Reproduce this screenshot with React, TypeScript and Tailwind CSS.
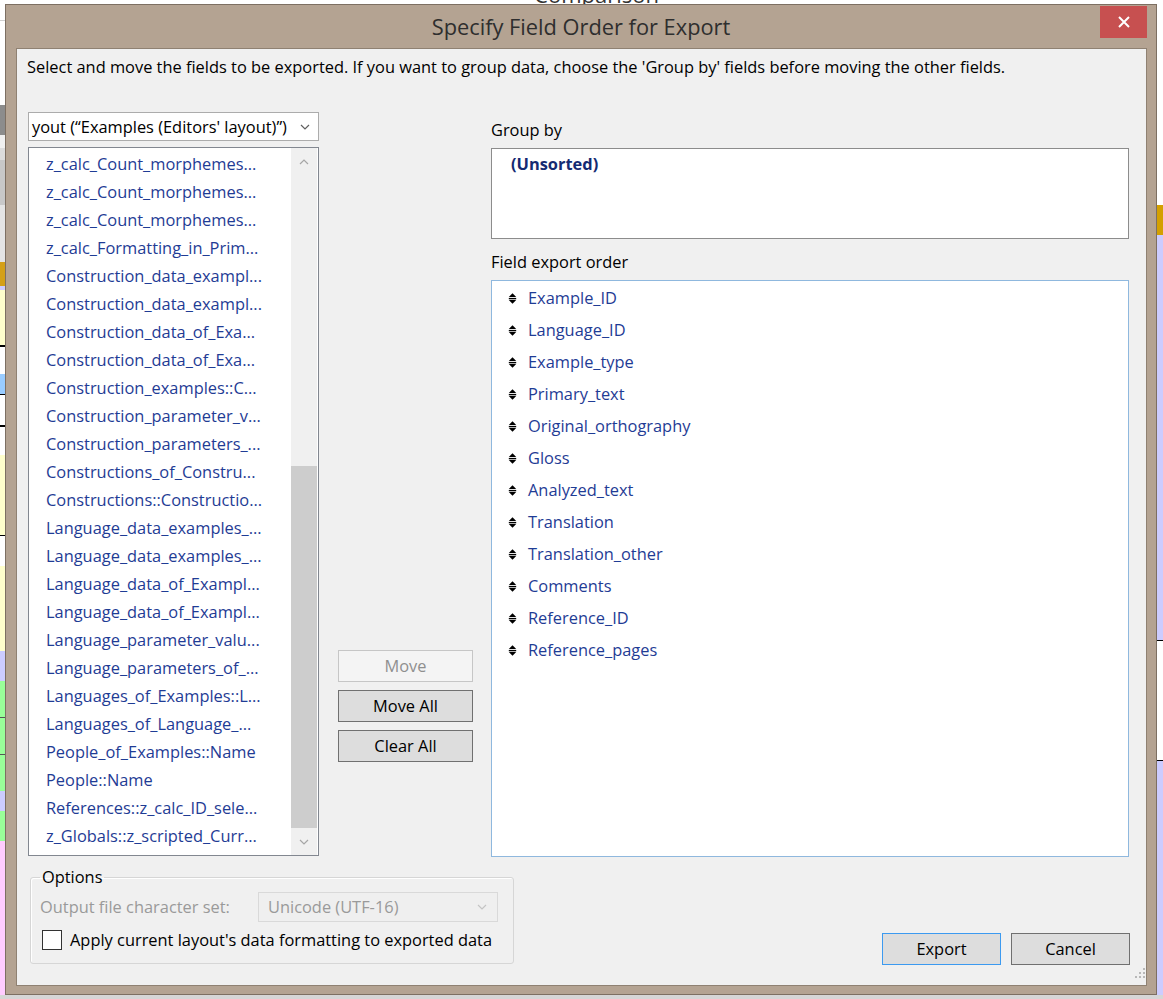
import React from "react";

const leftBlocks: [number, string][] = [
  [16, "#ffffff"], [1, "#d0d0d0"], [84, "#ffffff"], [30, "#8c8c8c"], [13, "#f0f0f0"], [12, "#dcdcdc"],
  [45, "#c8c8c8"], [57, "#e4e4e4"], [24, "#d4a017"], [4, "#ccccff"], [55, "#ffffcc"], [2, "#000000"],
  [27, "#ffffff"], [20, "#99ccff"], [1, "#000000"], [30, "#ffffff"], [2, "#000000"], [28, "#ffffff"],
  [80, "#ffffcc"], [1, "#000000"], [30, "#ffffff"], [85, "#ffffcc"], [30, "#ccccff"], [36, "#99ff99"],
  [1, "#555555"], [36, "#99ff99"], [1, "#555555"], [36, "#99ff99"], [20, "#ccccff"], [30, "#99ff99"],
];

const rightBlocks: [number, string][] = [
  [201, "#ffffff"], [30, "#d4a000"], [405, "#ccccff"], [1, "#000000"], [119, "#ffffff"], [1, "#000000"],
];

const listItems = [
  "z_calc_Count_morphemes...",
  "z_calc_Count_morphemes...",
  "z_calc_Count_morphemes...",
  "z_calc_Formatting_in_Prim...",
  "Construction_data_exampl...",
  "Construction_data_exampl...",
  "Construction_data_of_Exa...",
  "Construction_data_of_Exa...",
  "Construction_examples::C...",
  "Construction_parameter_v...",
  "Construction_parameters_...",
  "Constructions_of_Constru...",
  "Constructions::Constructio...",
  "Language_data_examples_...",
  "Language_data_examples_...",
  "Language_data_of_Exampl...",
  "Language_data_of_Exampl...",
  "Language_parameter_valu...",
  "Language_parameters_of_...",
  "Languages_of_Examples::L...",
  "Languages_of_Language_...",
  "People_of_Examples::Name",
  "People::Name",
  "References::z_calc_ID_sele...",
  "z_Globals::z_scripted_Curr...",
];

const fields = [
  "Example_ID",
  "Language_ID",
  "Example_type",
  "Primary_text",
  "Original_orthography",
  "Gloss",
  "Analyzed_text",
  "Translation",
  "Translation_other",
  "Comments",
  "Reference_ID",
  "Reference_pages",
];

function Chevron({ color = "#606060", up = false }: { color?: string; up?: boolean }) {
  return (
    <svg width="10" height="6" viewBox="0 0 10 6">
      <path d={up ? "M1 5 L5 1 L9 5" : "M1 1 L5 5 L9 1"} fill="none" stroke={color} strokeWidth="1.2" />
    </svg>
  );
}

function MoveIcon() {
  return (
    <svg width="9" height="11" viewBox="0 0 9 11">
      <path d="M4.5 0.3 L8.2 4 L0.8 4 Z" fill="#000" />
      <rect x="0.8" y="4.9" width="7.4" height="1.4" fill="#000" />
      <path d="M0.8 7.1 L8.2 7.1 L4.5 10.8 Z" fill="#000" />
    </svg>
  );
}

function Grip() {
  return (
    <svg width="14" height="14" viewBox="0 0 14 14">
      {[
        [11, 2], [11, 6], [7, 6], [11, 10], [7, 10], [3, 10],
      ].map(([x, y], i) => (
        <rect key={i} x={x} y={y} width="2" height="2" fill="#b8b8b8" />
      ))}
    </svg>
  );
}

export default function App() {
  return (
    <div className="w-[1163px] h-[999px] flex flex-col bg-white overflow-hidden font-['Segoe_UI','Open_Sans',sans-serif]">
      {/* top sliver of background app */}
      <div className="h-[4px] flex justify-center overflow-visible">
        <div className="text-[22px] leading-[22px] text-[#333] -mt-[17px] ml-[30px]">Comparison</div>
      </div>
      <div className="flex h-[991px]">
        <div className="w-[5px] flex flex-col">
          {leftBlocks.map(([h, c], i) => (
            <div key={i} style={{ height: h, background: c }} />
          ))}
          <div className="flex-1 bg-[#ffccff]" />
        </div>

        {/* dialog */}
        <div className="w-[1152px] h-[991px] border border-[#7d6f62] bg-[#b4a392] flex flex-col">
          <div className="h-[43px] grid grid-cols-[1fr_auto_1fr] items-start">
            <div />
            <div className="text-[21.8px] text-[#2e2e2e] pt-[8px] leading-[28px] whitespace-nowrap">Specify Field Order for Export</div>
            <div className="flex justify-end pr-[9px]">
              <div className="w-[47px] h-[32px] mt-[1px] bg-[#c75050] flex items-center justify-center">
                <svg width="12" height="12" viewBox="0 0 12 12">
                  <path d="M1 1 L11 11 M11 1 L1 11" stroke="#fff" strokeWidth="2" />
                </svg>
              </div>
            </div>
          </div>
          <div className="pl-[10px] pr-[9px] flex-1 flex flex-col">
            <div className="w-[1131px] h-[938px] border border-[#8f8172] bg-[#f0f0f0] flex flex-col text-[16.4px]">
              <div className="h-[63px] pl-[10px] pt-[8px] leading-[20px] text-[#000] whitespace-nowrap">
                Select and move the fields to be exported. If you want to group data, choose the 'Group by' fields before moving the other fields.
              </div>

              {/* main row */}
              <div className="flex h-[745px] pl-[11px]">
                {/* left column */}
                <div className="w-[291px] flex flex-col">
                  <div className="h-[29px] border border-[#acacac] bg-white flex items-center justify-between pl-[3px] pr-[8px]">
                    <span className="whitespace-nowrap leading-[20px]">yout (“Examples (Editors' layout)”)</span>
                    <Chevron />
                  </div>
                  <div className="mt-[6px] h-[709px] border border-[#828790] bg-white flex">
                    <div className="flex-1 pt-[2px] pl-[17px]">
                      {listItems.map((t, i) => (
                        <div key={i} className="h-[28px] leading-[28px] text-[#1f3c95] whitespace-nowrap">{t}</div>
                      ))}
                    </div>
                    <div className="w-[26px] bg-[#f0f0f0] flex flex-col mr-[1px]">
                      <div className="h-[22px] flex items-center justify-center pt-[6px]"><Chevron color="#a6a6a6" up /></div>
                      <div className="h-[296px]" />
                      <div className="h-[362px] bg-[#cdcdcd]" />
                      <div className="flex-1 flex items-center justify-center"><Chevron color="#a6a6a6" /></div>
                    </div>
                  </div>
                </div>

                {/* middle buttons */}
                <div className="w-[135px] ml-[19px] pt-[538px] flex flex-col gap-[8px]">
                  <div className="h-[32px] border border-[#c6c6c6] bg-[#f4f4f4] text-[#8f8f8f] flex items-center justify-center">Move</div>
                  <div className="h-[32px] border border-[#707070] bg-[#dddddd] text-[#000] flex items-center justify-center">Move All</div>
                  <div className="h-[32px] border border-[#707070] bg-[#dddddd] text-[#000] flex items-center justify-center">Clear All</div>
                </div>

                {/* right column */}
                <div className="w-[638px] ml-[18px] pt-[8px] flex flex-col">
                  <div className="h-[20px] leading-[20px] text-[#000]">Group by</div>
                  <div className="mt-[8px] h-[91px] border border-[#8c8c8c] bg-white pt-[1px] pl-[19px]">
                    <div className="h-[28px] leading-[28px] font-bold text-[#142a72]">(Unsorted)</div>
                  </div>
                  <div className="mt-[13px] h-[20px] leading-[20px] text-[#000]">Field export order</div>
                  <div className="mt-[8px] h-[577px] border border-[#8fb8de] bg-white pt-[1px] pl-[16px]">
                    {fields.map((f, i) => (
                      <div key={i} className="h-[32px] flex items-center">
                        <MoveIcon />
                        <span className="ml-[11px] leading-[20px] text-[#1f3c95]">{f}</span>
                      </div>
                    ))}
                  </div>
                </div>
              </div>

              {/* bottom row */}
              <div className="flex-1 flex items-start pl-[13px] mt-[10px]">
                <fieldset className="w-[484px] h-[97px] border border-[#d6d6d6] rounded-[3px] shadow-[inset_1px_1px_0_#ffffff] px-[9px]">
                  <legend className="px-[2px] leading-[20px] text-[#000]">Options</legend>
                  <div className="flex items-center mt-[5px]">
                    <span className="w-[218px] text-[#9a9a9a] leading-[20px] whitespace-nowrap">Output file character set:</span>
                    <div className="w-[240px] h-[30px] border border-[#d9d9d9] bg-[#efefef] flex items-center pl-[9px] pr-[10px]">
                      <span className="flex-1 text-[#9a9a9a]">Unicode (UTF-16)</span>
                      <Chevron color="#c4c4c4" />
                    </div>
                  </div>
                  <div className="flex items-center mt-[8px] ml-[2px]">
                    <div className="w-[20px] h-[20px] border border-[#333333] bg-white" />
                    <span className="ml-[8px] leading-[20px] text-[#000] whitespace-nowrap">Apply current layout's data formatting to exported data</span>
                  </div>
                </fieldset>
                <div className="flex-1" />
                <div className="mt-[66px] flex gap-[10px]">
                  <div className="w-[119px] h-[32px] border border-[#3c9af0] bg-[#dddddd] text-[#000] flex items-center justify-center">Export</div>
                  <div className="w-[119px] h-[32px] border border-[#707070] bg-[#dddddd] text-[#000] flex items-center justify-center">Cancel</div>
                </div>
                <div className="w-[16px] self-end mb-[5px] flex justify-end">
                  <Grip />
                </div>
              </div>
            </div>
          </div>
        </div>

        <div className="flex-1 flex flex-col">
          {rightBlocks.map(([h, c], i) => (
            <div key={i} style={{ height: h, background: c }} />
          ))}
          <div className="flex-1 bg-[#ccccff]" />
        </div>
      </div>
      <div className="flex-1 bg-[#d6d6d6]" />
    </div>
  );
}
